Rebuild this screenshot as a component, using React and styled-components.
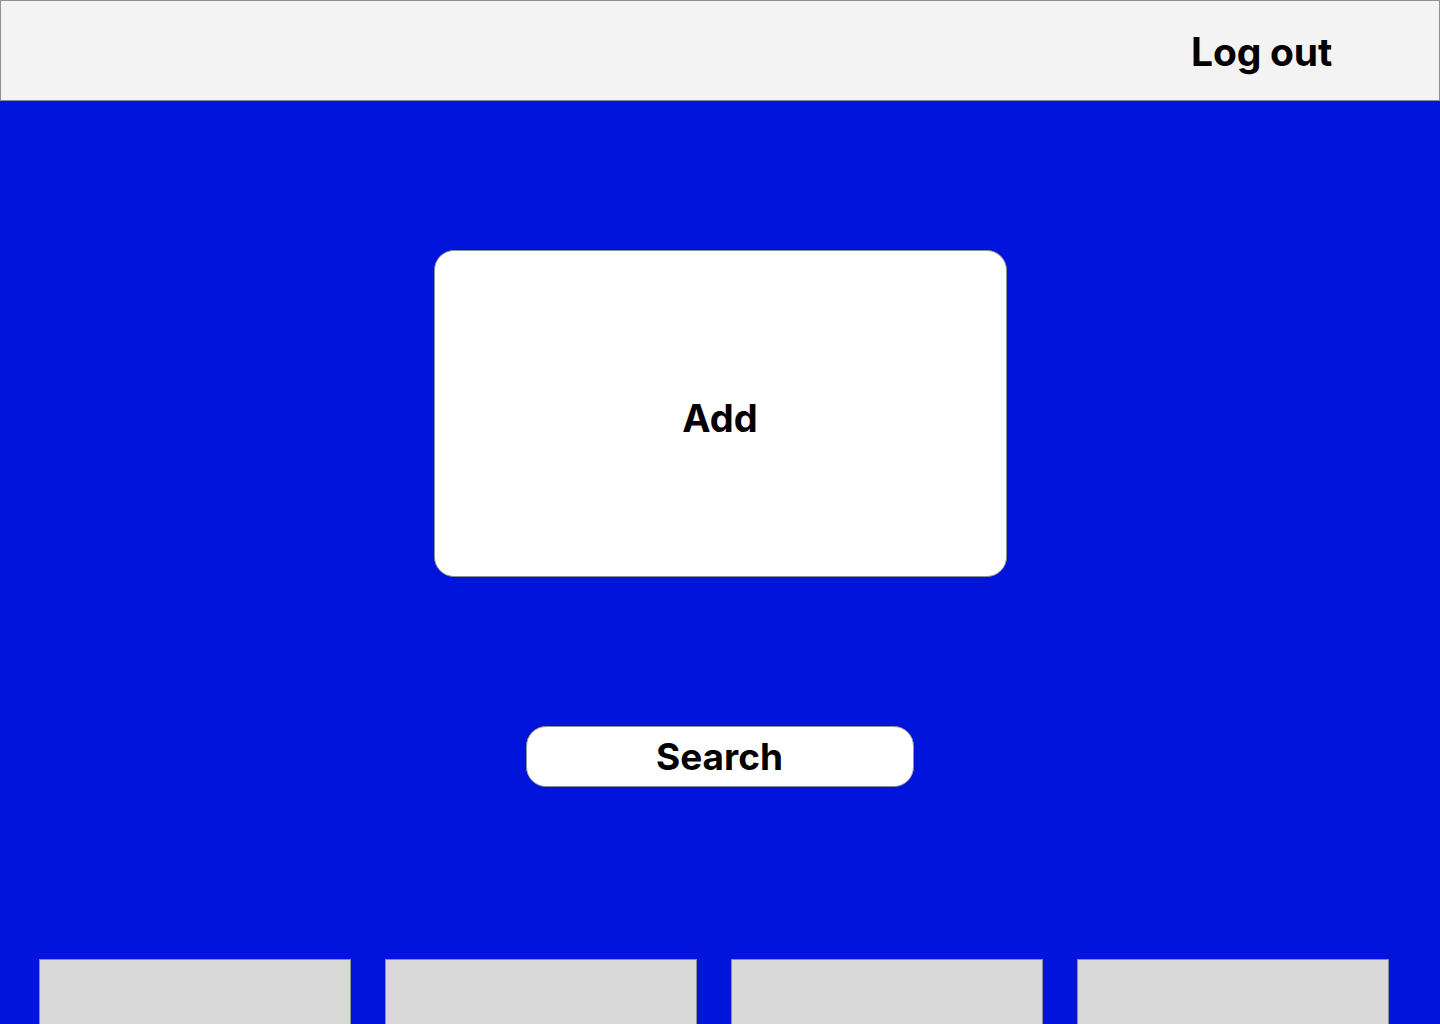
import React from 'react';
import styled, { createGlobalStyle } from 'styled-components';

const GlobalStyle = createGlobalStyle`
  html, body {
    margin: 0;
    padding: 0;
  }
  body {
    font-family: Inter, "Noto Sans", sans-serif;
  }
  * {
    box-sizing: border-box;
  }
`;

const Page = styled.div`
  width: 1440px;
  height: 1024px;
  overflow: hidden;
  background-color: #0014dc;
  display: flex;
  flex-direction: column;
`;

const Header = styled.header`
  height: 101px;
  flex-shrink: 0;
  background-color: #f3f3f3;
  border: 1px solid #8f8f8f;
  display: flex;
  align-items: center;
  justify-content: flex-end;
  padding-right: 107px;
`;

const LogOut = styled.button`
  border: none;
  background: none;
  padding: 0;
  margin-top: 1px;
  font-family: Inter, sans-serif;
  font-weight: 700;
  font-size: 39px;
  letter-spacing: -0.2px;
  color: #000;
  cursor: pointer;
`;

const Main = styled.main`
  display: flex;
  flex-direction: column;
  align-items: center;
  padding-top: 149px;
`;

const AddCard = styled.button`
  width: 573px;
  height: 327px;
  background-color: #fff;
  border: 1px solid #8f8f8f;
  border-radius: 20px;
  display: flex;
  align-items: center;
  justify-content: center;
  font-family: Inter, sans-serif;
  font-weight: 700;
  font-size: 38px;
  color: #000;
  cursor: pointer;
  padding: 8px 0 0;
`;

const SearchButton = styled.button`
  margin-top: 149px;
  margin-left: -1px;
  width: 388px;
  height: 61px;
  background-color: #fff;
  border: 1px solid #8f8f8f;
  border-radius: 20px;
  display: flex;
  align-items: center;
  justify-content: center;
  font-family: Inter, sans-serif;
  font-weight: 700;
  font-size: 37px;
  color: #000;
  cursor: pointer;
  padding: 0;
`;

const Tiles = styled.div`
  margin-top: 172px;
  padding-left: 39px;
  display: flex;
  gap: 34px;
`;

const Tile = styled.div`
  width: 312px;
  height: 120px;
  flex-shrink: 0;
  background-color: #d9d9d9;
  border: 1px solid #8f8f8f;
`;

const App = () => {
  return (
    <>
      <GlobalStyle />
      <Page>
        <Header>
          <LogOut>Log out</LogOut>
        </Header>
        <Main>
          <AddCard>Add</AddCard>
          <SearchButton>Search</SearchButton>
        </Main>
        <Tiles>
          {[0, 1, 2, 3].map((i) => (
            <Tile key={i} />
          ))}
        </Tiles>
      </Page>
    </>
  );
};

export default App;
